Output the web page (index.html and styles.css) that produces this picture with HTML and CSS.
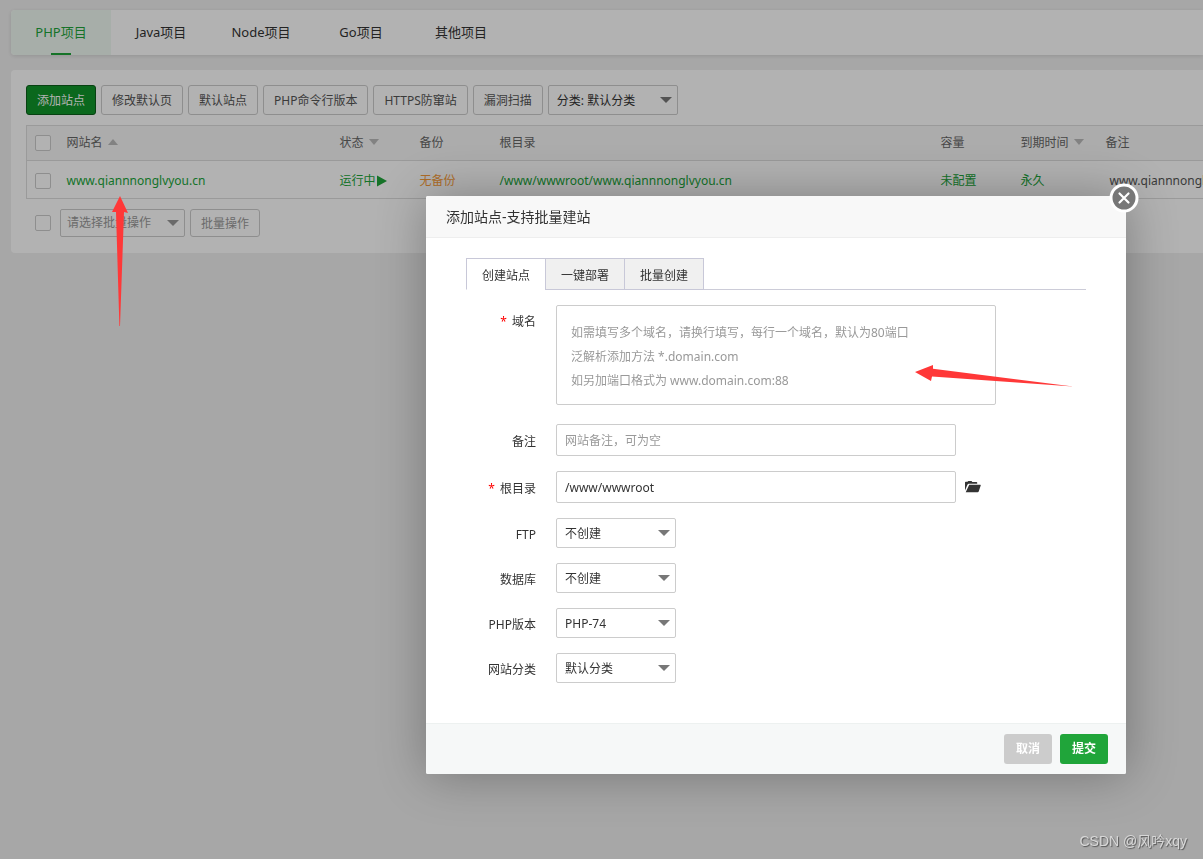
FILE: index.html
```
<!DOCTYPE html>
<html lang="zh-CN">
<head>
<meta charset="utf-8">
<title>网站</title>
<link rel="stylesheet" href="styles.css">
</head>
<body>
<div class="page">
  <nav class="project-tabs">
    <button type="button" class="project-tab active">PHP项目</button>
    <button type="button" class="project-tab">Java项目</button>
    <button type="button" class="project-tab">Node项目</button>
    <button type="button" class="project-tab">Go项目</button>
    <button type="button" class="project-tab">其他项目</button>
  </nav>

  <main class="card">
    <div class="toolbar">
      <button type="button" class="btn btn-green">添加站点</button>
      <button type="button" class="btn">修改默认页</button>
      <button type="button" class="btn">默认站点</button>
      <button type="button" class="btn">PHP命令行版本</button>
      <button type="button" class="btn">HTTPS防窜站</button>
      <button type="button" class="btn">漏洞扫描</button>
      <span class="select select-filter"><select aria-label="分类"><option>分类: 默认分类</option></select></span>
    </div>

    <div class="table-wrap">
      <table class="sites">
        <colgroup>
          <col class="col-check"><col class="col-name"><col class="col-small"><col class="col-small">
          <col class="col-root"><col class="col-small"><col class="col-expire"><col>
        </colgroup>
        <thead>
          <tr>
            <th><input type="checkbox" class="check" aria-label="全选"></th>
            <th>网站名<i class="sort sort-up"></i></th>
            <th>状态<i class="sort"></i></th>
            <th>备份</th>
            <th>根目录</th>
            <th>容量</th>
            <th>到期时间<i class="sort"></i></th>
            <th>备注</th>
          </tr>
        </thead>
        <tbody>
          <tr>
            <td><input type="checkbox" class="check" aria-label="选择站点"></td>
            <td><a href="#">www.qiannnonglvyou.cn</a></td>
            <td><a href="#" class="status">运行中<svg class="play" viewBox="0 0 10 12"><path d="M0 0.5 10 6 0 11.5z"/></svg></a></td>
            <td><a href="#" class="warn">无备份</a></td>
            <td><a href="#">/www/wwwroot/www.qiannnonglvyou.cn</a></td>
            <td><a href="#">未配置</a></td>
            <td><a href="#">永久</a></td>
            <td class="remark">www.qiannnonglvyou.cn</td>
          </tr>
        </tbody>
      </table>
    </div>

    <div class="batch">
      <input type="checkbox" class="check" aria-label="批量选择">
      <span class="select select-batch"><select aria-label="批量操作"><option>请选择批量操作</option></select></span>
      <button type="button" class="btn btn-muted">批量操作</button>
    </div>
  </main>
</div>

<div class="shade"></div>

<section class="dialog" role="dialog" aria-labelledby="dialog-title">
  <h2 class="dialog-title" id="dialog-title">添加站点-支持批量建站</h2>
  <button type="button" class="close" aria-label="关闭">
    <svg viewBox="0 0 30 30"><circle cx="15" cy="15" r="13" fill="#777" stroke="#fff" stroke-width="3"/><path d="M10.500 10.500 19.500 19.500M19.500 10.500 10.500 19.500" stroke="#fff" stroke-width="2.200" stroke-linecap="round"/></svg>
  </button>

  <form class="dialog-body">
    <div class="form-tabs">
      <button type="button" class="form-tab active">创建站点</button>
      <button type="button" class="form-tab">一键部署</button>
      <button type="button" class="form-tab">批量创建</button>
    </div>
    <div class="fields">
      <div class="field field-domain">
        <label for="domain"><span class="required">*</span>域名</label>
        <textarea id="domain" class="box" placeholder="如需填写多个域名，请换行填写，每行一个域名，默认为80端口&#10;泛解析添加方法 *.domain.com&#10;如另加端口格式为 www.domain.com:88"></textarea>
      </div>
      <div class="field">
        <label for="note">备注</label>
        <input id="note" class="box" type="text" placeholder="网站备注，可为空">
      </div>
      <div class="field">
        <label for="root"><span class="required">*</span>根目录</label>
        <input id="root" class="box" type="text" value="/www/wwwroot">
        <button type="button" class="folder" aria-label="选择目录">
          <svg viewBox="0 0 16 12"><path d="M0 9.500V1.500Q0 .7.8.7H2.500L3.300 0H6.500L7.300.9H11.500Q12.200.9 12.200 1.600V2.800H4Q2.800 2.800 2.300 4z"/><path d="M4.200 3.700H15.200Q16 3.700 15.700 4.500L13.800 10.300Q13.500 11.200 12.600 11.200H.7Z"/></svg>
        </button>
      </div>
      <div class="field">
        <label for="ftp">FTP</label>
        <span class="select"><select id="ftp"><option>不创建</option></select></span>
      </div>
      <div class="field">
        <label for="database">数据库</label>
        <span class="select"><select id="database"><option>不创建</option></select></span>
      </div>
      <div class="field">
        <label for="php">PHP版本</label>
        <span class="select"><select id="php"><option>PHP-74</option></select></span>
      </div>
      <div class="field">
        <label for="category">网站分类</label>
        <span class="select"><select id="category"><option>默认分类</option></select></span>
      </div>
    </div>
  </form>

  <footer class="dialog-footer">
    <button type="button" class="action">取消</button>
    <button type="button" class="action action-submit">提交</button>
  </footer>
</section>

<svg class="pointer pointer-up" viewBox="0 0 16 130"><path d="M8 0 16 17 12 16 8 130H7.400L4 16 0 16z"/></svg>
<svg class="pointer pointer-left" viewBox="0 0 158 24"><path d="M0 8 18 1V4.800L158 22.500 17 12.500 16 17z"/></svg>
<div class="watermark">CSDN @风吟xqy</div>
</body>
</html>
```
FILE: styles.css
```
* {
  box-sizing: border-box;
}

body {
  margin: 0;
  min-height: 100vh;
  background: #f0f0f0;
  color: #333;
  font: 12px/18px "Noto Sans", "Noto Sans CJK SC", sans-serif;
}

button,
input,
select,
textarea {
  margin: 0;
  font: inherit;
  color: inherit;
}

a {
  color: #20a53a;
  text-decoration: none;
}

.page {
  padding: 10px 0 0 11px;
}

.project-tabs {
  display: flex;
  height: 45px;
  margin-bottom: 15px;
  overflow: hidden;
  background: #fff;
  border-radius: 4px 0 0 4px;
  box-shadow: 0 1px 4px rgba(0, 0, 0, 0.12);
}

.project-tab {
  display: flex;
  flex-direction: column;
  align-items: center;
  width: 100px;
  padding: 0;
  border: 0;
  background: none;
  font-size: 13px;
  line-height: 45px;
}

.project-tab.active {
  background: #f0f9f2;
  color: #20a53a;
}

.project-tab.active::after {
  content: "";
  width: 20px;
  height: 2px;
  margin-top: -2px;
  background: #20a53a;
}

.card {
  padding: 15px 0 16px 15px;
  background: #fff;
  border-radius: 4px 0 0 4px;
}

.toolbar {
  display: flex;
  gap: 5px;
  margin-bottom: 10px;
}

.btn {
  height: 30px;
  padding: 2px 10px 0;
  border: 1px solid #ccc;
  border-radius: 3px;
  background: #fff;
  color: #555;
  white-space: nowrap;
}

.btn-green {
  background: #10952a;
  border-color: #0c5e1b;
  color: #fff;
}

.btn-muted {
  height: 28px;
  color: #999;
}

.select {
  position: relative;
  display: block;
  width: 120px;
  height: 30px;
}

.select select {
  width: 100%;
  height: 100%;
  padding: 2px 24px 0 8px;
  border: 1px solid #ccc;
  border-radius: 2px;
  background: #fff;
  appearance: none;
}

.select::after {
  content: "";
  position: absolute;
  top: 12px;
  right: 6px;
  border: 6px solid transparent;
  border-top-color: #777;
  border-bottom: 0;
  pointer-events: none;
}

.select-filter {
  width: 130px;
}

.select-batch {
  width: 125px;
  height: 28px;
  color: #999;
}

.select-batch select {
  padding: 0 24px 0 6px;
}

.select-batch::after {
  top: 11px;
  border-top-color: #999;
}

.table-wrap {
  overflow: hidden;
}

.sites {
  width: 1500px;
  table-layout: fixed;
  border-collapse: collapse;
  border: 1px solid #ddd;
}

.col-check {
  width: 32px;
}

.col-name {
  width: 273px;
}

.col-small {
  width: 80px;
}

.col-root {
  width: 441px;
}

.col-expire {
  width: 85px;
}

.sites th,
.sites td {
  height: 38px;
  padding: 2px 8px 0;
  border-bottom: 1px solid #ddd;
  text-align: left;
  font-weight: 400;
  white-space: nowrap;
}

.sites th {
  height: 35px;
  padding-top: 0;
  background: #f6f6f6;
  color: #666;
}

.sites .remark {
  padding-left: 12px;
  color: #555;
}

.sites .warn {
  color: #fa9d3a;
}

.sort {
  display: inline-block;
  margin-left: 5px;
  vertical-align: 2px;
  border: 5px solid transparent;
  border-top: 6px solid #bbb;
  border-bottom: 0;
}

.sort-up {
  border-top: 0;
  border-bottom: 6px solid #bbb;
}

.status {
  display: flex;
  align-items: center;
  gap: 1px;
}

.play {
  width: 10px;
  height: 12px;
  fill: #20a53a;
}

.check {
  display: block;
  width: 16px;
  height: 16px;
  border: 1px solid #ccc;
  border-radius: 2px;
  background: #fff;
  appearance: none;
}

.batch {
  display: flex;
  align-items: center;
  gap: 5px;
  padding: 10px 0 0 9px;
}

.batch .check {
  margin-right: 4px;
}

.shade {
  position: fixed;
  inset: 0;
  background: rgba(0, 0, 0, 0.3);
}

.dialog {
  position: absolute;
  top: 196px;
  left: 426px;
  width: 700px;
  background: #fff;
  border-radius: 2px;
  box-shadow: 1px 1px 50px rgba(0, 0, 0, 0.3);
}

.dialog-title {
  margin: 0;
  padding: 0 20px;
  border-bottom: 1px solid #eee;
  border-radius: 2px 2px 0 0;
  background: #f8f8f8;
  font-size: 14px;
  font-weight: 400;
  line-height: 41px;
}

.close {
  position: absolute;
  top: -13px;
  right: -13px;
  width: 30px;
  height: 30px;
  padding: 0;
  border: 0;
  background: none;
}

.close svg {
  display: block;
}

.dialog-body {
  padding: 20px 40px 40px;
}

.form-tabs {
  display: flex;
  height: 32px;
  border-bottom: 1px solid #ccccd8;
}

.form-tab {
  width: 80px;
  height: 32px;
  margin-right: -1px;
  padding: 3px 0 0;
  border: 1px solid #c8c8d8;
  background: #f0f0f0;
}

.form-tab.active {
  border-bottom-color: #fff;
  background: #fff;
}

.fields {
  display: grid;
  gap: 15px;
  padding-top: 15px;
}

.field {
  display: flex;
  align-items: center;
}

.field label {
  width: 90px;
  padding: 3px 20px 0 0;
  text-align: right;
}

.field-domain {
  align-items: flex-start;
  padding-bottom: 4px;
}

.field-domain label {
  padding-top: 8px;
}

.required {
  margin-right: 5px;
  color: #f00;
}

.box {
  width: 400px;
  height: 32px;
  padding: 0 8px;
  border: 1px solid #ccc;
  border-radius: 2px;
  background: #fff;
}

.box::placeholder {
  color: #999;
}

textarea.box {
  width: 440px;
  height: 100px;
  padding: 15px 14px 12px;
  line-height: 24px;
  resize: none;
  overflow: hidden;
}

.folder {
  width: 16px;
  height: 12px;
  margin-left: 9px;
  padding: 0;
  border: 0;
  background: none;
  fill: #333;
}

.folder svg {
  display: block;
}

.dialog-footer {
  display: flex;
  justify-content: flex-end;
  gap: 8px;
  padding: 10px 18px;
  border-top: 1px solid #edf1f0;
  border-radius: 0 0 2px 2px;
  background: #f6f8f8;
}

.action {
  width: 48px;
  height: 30px;
  padding: 0;
  border: 0;
  border-radius: 3px;
  background: #ccc;
  color: #fff;
  font-weight: 700;
}

.action-submit {
  background: #20a53a;
}

.pointer {
  position: absolute;
  fill: #ff3838;
  pointer-events: none;
}

.pointer-up {
  top: 196px;
  left: 112px;
  width: 16px;
  height: 130px;
}

.pointer-left {
  top: 364px;
  left: 915px;
  width: 158px;
  height: 24px;
}

.watermark {
  position: absolute;
  right: 16px;
  bottom: 8px;
  color: #d8d8d8;
  font: 14px/20px "Liberation Sans", "Noto Sans CJK SC", sans-serif;
  text-shadow: 1px 1px 1px #555;
}
```
